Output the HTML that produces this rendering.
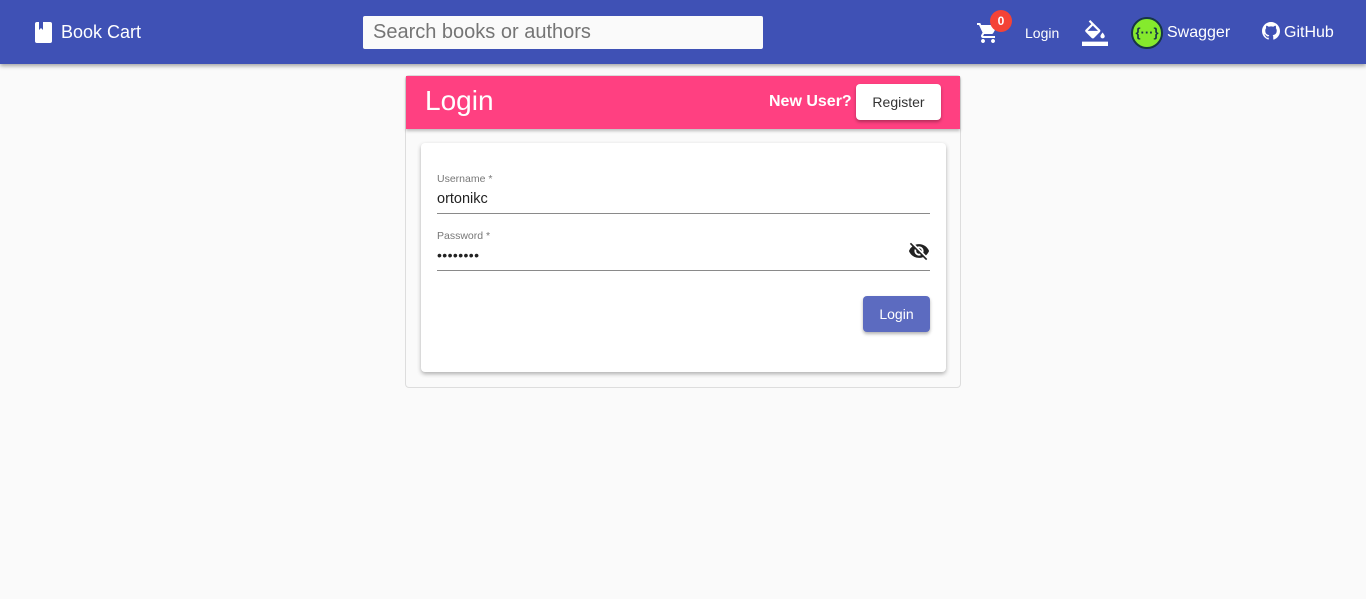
<!DOCTYPE html>
<html><head><style>
*{box-sizing:border-box;margin:0;padding:0}
body{width:1366px;height:599px;background:#fafafa;font-family:"Liberation Sans",sans-serif;position:relative;overflow:hidden}
.bar{position:absolute;left:0;top:0;width:1366px;height:64px;background:#3f51b5;box-shadow:0 2px 4px rgba(0,0,0,.35);color:#fff}
.t{position:absolute;white-space:nowrap}
.search{position:absolute;left:363px;top:16px;width:400px;height:33px;background:#fafafa;border-radius:2px;color:#757575;font-size:20px;padding:5px 10px}
.panel{position:absolute;left:405px;top:75px;width:556px;height:313px;border:1px solid #ddd;border-radius:4px;background:#fafafa}
.head{position:absolute;left:0;top:0;width:554px;height:53px;background:#ff4081;box-shadow:0 2px 3px rgba(0,0,0,.25)}
.card{position:absolute;left:15px;top:67px;width:525px;height:229px;background:#fff;border-radius:4px;box-shadow:0 2px 4px rgba(0,0,0,.3)}
.line{position:absolute;left:16px;width:493px;height:1px;background:#8a8a8a}
</style></head><body>
<div class="bar">
<svg class="t" style="left:35px;top:22px" width="18" height="21" viewBox="0 0 18 21"><rect x="0" y="0" width="17" height="21" rx="2" fill="#fff"/><path d="M4 0v8l2-2 2 2V0" fill="#3f51b5"/></svg>
<div class="t" style="left:61px;top:22px;font-size:18px">Book Cart</div>
<div class="search">Search books or authors</div>
<svg class="t" style="left:976px;top:21px" width="24" height="24" viewBox="0 0 24 24"><path fill="#fff" d="M7 18c-1.1 0-2 .9-2 2s.9 2 2 2 2-.9 2-2-.9-2-2-2zM1 2v2h2l3.6 7.59-1.35 2.450c-.16.28-.25.61-.25.96 0 1.1.9 2 2 2h12v-2H7.42c-.14 0-.25-.11-.25-.25l.03-.12.9-1.63h7.45c.75 0 1.410-.41 1.75-1.03l3.58-6.49A1 1 0 0020 4H5.21l-.94-2H1zm16 16c-1.1 0-2 .9-2 2s.9 2 2 2 2-.9 2-2-.9-2-2-2z"/></svg>
<div class="t" style="left:990px;top:10px;width:22px;height:22px;border-radius:50%;background:#f44336;font-size:12px;font-weight:bold;text-align:center;line-height:22px">0</div>
<div class="t" style="left:1025px;top:25px;font-size:14px">Login</div>
<svg class="t" style="left:1082px;top:20px" width="26" height="26" viewBox="0 0 24 24"><path fill="#fff" d="M16.56 8.94L7.62 0 6.21 1.41l2.38 2.38-5.15 5.15a1.49 1.49 0 000 2.12l5.5 5.5c.29.29.68.44 1.06.44s.77-.15 1.06-.44l5.5-5.5c.59-.58.59-1.53 0-2.12zM5.21 10L10 5.21 14.79 10H5.21zM19 11.5s-2 2.17-2 3.5c0 1.1.9 2 2 2s2-.9 2-2c0-1.33-2-3.5-2-3.5zM0 20h24v4H0z"/></svg>
<div class="t" style="left:1131px;top:17px;width:32px;height:32px;border-radius:50%;background:#85ea2d;border:2px solid #173647;color:#173647;font-size:13px;font-weight:bold;text-align:center;line-height:27px">{···}</div>
<div class="t" style="left:1167px;top:24px;font-size:16px">Swagger</div>
<svg class="t" style="left:1262px;top:22px" width="18" height="18" viewBox="0 0 16 16"><path fill="#fff" d="M8 0C3.58 0 0 3.58 0 8c0 3.54 2.29 6.53 5.47 7.59.4.07.55-.17.55-.38v-1.33c-2.23.48-2.7-1.07-2.7-1.07-.36-.92-.89-1.170-.89-1.17-.73-.5.05-.49.05-.49.8.06 1.23.83 1.23.83.71 1.22 1.87.87 2.33.66.07-.52.28-.87.5-1.07-1.78-.2-3.64-.89-3.64-3.95 0-.87.31-1.59.82-2.15-.08-.2-.36-1.02.08-2.12 0 0 .67-.21 2.2.82a7.6 7.6 0 014 0c1.53-1.04 2.2-.82 2.2-.82.44 1.1.16 1.92.08 2.12.51.56.82 1.27.82 2.15 0 3.07-1.87 3.75-3.65 3.95.29.25.54.73.54 1.48v2.2c0 .21.15.46.55.38A8 8 0 0016 8c0-4.42-3.58-8-8-8z"/></svg>
<div class="t" style="left:1284px;top:24px;font-size:16px">GitHub</div>
</div>
<div class="panel">
<div class="head">
<div class="t" style="left:19px;top:9px;font-size:28px;color:#fff">Login</div>
<div class="t" style="left:363px;top:17px;font-size:16px;font-weight:bold;color:#fff">New User?</div>
<div class="t" style="left:450px;top:8px;width:85px;height:36px;background:#fff;border-radius:4px;box-shadow:0 2px 3px rgba(0,0,0,.3);font-size:14px;color:#333;text-align:center;line-height:36px">Register</div>
</div>
<div class="card">
<div class="t" style="left:16px;top:30px;font-size:10.5px;color:#777">Username *</div>
<div class="t" style="left:16px;top:48px;font-size:14.5px;color:#222">ortonikc</div>
<div class="line" style="top:70px"></div>
<div class="t" style="left:16px;top:87px;font-size:10.5px;color:#777">Password *</div>
<div class="t" style="left:16px;top:104px;font-size:14px;color:#222;letter-spacing:0.4px">••••••••</div>
<svg class="t" style="left:487px;top:97px" width="22" height="22" viewBox="0 0 24 24"><path fill="#222" d="M12 7c2.76 0 5 2.24 5 5 0 .65-.13 1.26-.36 1.83l2.92 2.92c1.51-1.26 2.7-2.89 3.43-4.75-1.73-4.39-6-7.5-11-7.5-1.4 0-2.74.25-3.980.7l2.16 2.16C10.74 7.13 11.35 7 12 7zM2 4.27l2.28 2.28.46.46A11.8 11.8 0 001 12c1.73 4.39 6 7.5 11 7.5 1.55 0 3.03-.3 4.38-.84l.42.42L19.73 22 21 20.73 3.27 3 2 4.27zM7.53 9.8l1.55 1.55c-.05.21-.08.43-.08.65 0 1.66 1.34 3 3 3 .22 0 .44-.03.65-.08l1.55 1.55c-.67.33-1.41.53-2.2.53-2.76 0-5-2.24-5-5 0-.79.2-1.53.53-2.2zm4.31-.78l3.15 3.15.02-.16c0-1.66-1.34-3-3-3l-.17.01z"/></svg>
<div class="line" style="top:127px"></div>
<div class="t" style="left:442px;top:153px;width:67px;height:36px;background:#5c6bc0;border-radius:4px;box-shadow:0 2px 3px rgba(0,0,0,.3);color:#fff;font-size:14px;text-align:center;line-height:36px">Login</div>
</div>
</div>
</body></html>
